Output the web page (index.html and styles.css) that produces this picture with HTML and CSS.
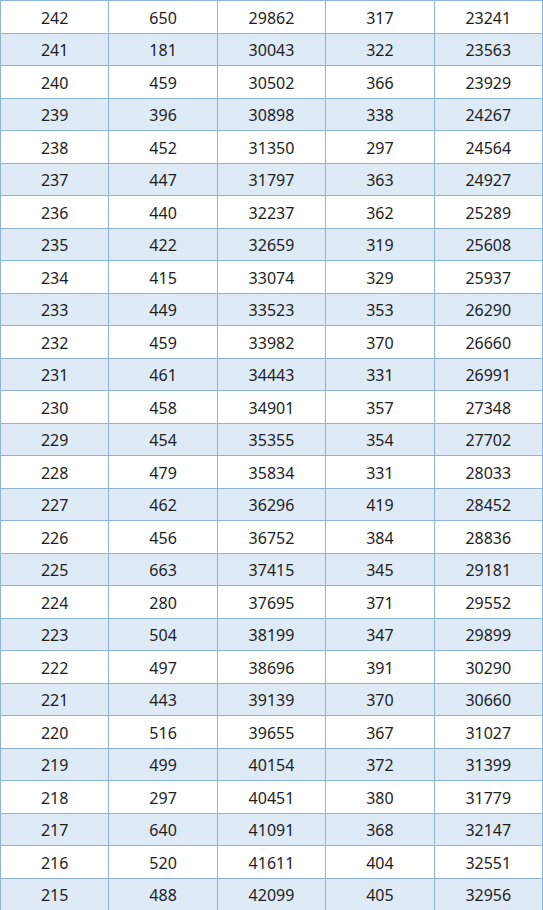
FILE: index.html
```html
<!DOCTYPE html>
<html>
<head>
<meta charset="utf-8">
<link rel="stylesheet" href="styles.css">
</head>
<body>
<table class="data">
<tbody>
<tr><td>242</td><td>650</td><td>29862</td><td>317</td><td>23241</td></tr>
<tr class="alt"><td>241</td><td>181</td><td>30043</td><td>322</td><td>23563</td></tr>
<tr><td>240</td><td>459</td><td>30502</td><td>366</td><td>23929</td></tr>
<tr class="alt"><td>239</td><td>396</td><td>30898</td><td>338</td><td>24267</td></tr>
<tr><td>238</td><td>452</td><td>31350</td><td>297</td><td>24564</td></tr>
<tr class="alt"><td>237</td><td>447</td><td>31797</td><td>363</td><td>24927</td></tr>
<tr><td>236</td><td>440</td><td>32237</td><td>362</td><td>25289</td></tr>
<tr class="alt"><td>235</td><td>422</td><td>32659</td><td>319</td><td>25608</td></tr>
<tr><td>234</td><td>415</td><td>33074</td><td>329</td><td>25937</td></tr>
<tr class="alt"><td>233</td><td>449</td><td>33523</td><td>353</td><td>26290</td></tr>
<tr><td>232</td><td>459</td><td>33982</td><td>370</td><td>26660</td></tr>
<tr class="alt"><td>231</td><td>461</td><td>34443</td><td>331</td><td>26991</td></tr>
<tr><td>230</td><td>458</td><td>34901</td><td>357</td><td>27348</td></tr>
<tr class="alt"><td>229</td><td>454</td><td>35355</td><td>354</td><td>27702</td></tr>
<tr><td>228</td><td>479</td><td>35834</td><td>331</td><td>28033</td></tr>
<tr class="alt"><td>227</td><td>462</td><td>36296</td><td>419</td><td>28452</td></tr>
<tr><td>226</td><td>456</td><td>36752</td><td>384</td><td>28836</td></tr>
<tr class="alt"><td>225</td><td>663</td><td>37415</td><td>345</td><td>29181</td></tr>
<tr><td>224</td><td>280</td><td>37695</td><td>371</td><td>29552</td></tr>
<tr class="alt"><td>223</td><td>504</td><td>38199</td><td>347</td><td>29899</td></tr>
<tr><td>222</td><td>497</td><td>38696</td><td>391</td><td>30290</td></tr>
<tr class="alt"><td>221</td><td>443</td><td>39139</td><td>370</td><td>30660</td></tr>
<tr><td>220</td><td>516</td><td>39655</td><td>367</td><td>31027</td></tr>
<tr class="alt"><td>219</td><td>499</td><td>40154</td><td>372</td><td>31399</td></tr>
<tr><td>218</td><td>297</td><td>40451</td><td>380</td><td>31779</td></tr>
<tr class="alt"><td>217</td><td>640</td><td>41091</td><td>368</td><td>32147</td></tr>
<tr><td>216</td><td>520</td><td>41611</td><td>404</td><td>32551</td></tr>
<tr class="alt"><td>215</td><td>488</td><td>42099</td><td>405</td><td>32956</td></tr>
</tbody>
</table>
</body>
</html>
```
FILE: styles.css
```css
html, body {
  margin: 0;
  padding: 0;
  background: #ffffff;
}
.data {
  width: 543px;
  border-collapse: collapse;
  table-layout: fixed;
  font-family: "Noto Sans", "Open Sans", sans-serif;
  font-size: 16px;
  color: #1e1e1e;
}
.data td {
  border: 1px solid #8fb4dc;
  height: 29.5px;
  padding: 2px 0 0 0;
  text-align: center;
  vertical-align: middle;
  line-height: 20px;
}
.data tr.alt td {
  background: #dfeaf7;
}
```
